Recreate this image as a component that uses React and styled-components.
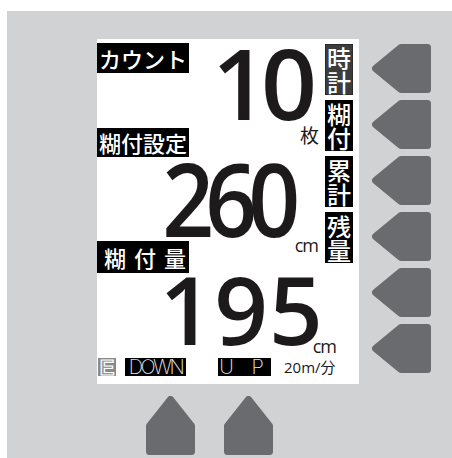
import React from "react";
import styled, { createGlobalStyle } from "styled-components";

const Global = createGlobalStyle`
  html, body { margin: 0; padding: 0; background: #fff; overflow: hidden; }
  #root { width: 452px; height: 458px; }
`;

const Panel = styled.div`
  box-sizing: border-box;
  margin: 11px 0 0 7px;
  width: 445px;
  height: 447px;
  background: #d1d2d4;
  padding: 28px 0 0 90px;
  display: grid;
  grid-template-columns: 262px 59px;
  grid-template-rows: 345px auto;
  column-gap: 13px;
`;

const Screen = styled.div`
  box-sizing: border-box;
  background: #fff;
  display: flex;
  flex-direction: column;
  padding-right: 6px;
  color: #1c1a1b;
`;

const TopPart = styled.div`
  display: flex;
`;

const LeftArea = styled.div`
  flex: 1;
  display: flex;
  flex-direction: column;
  align-items: flex-start;
`;

const Label = styled.div`
  box-sizing: border-box;
  width: 92px;
  height: ${(p) => p.$h}px;
  margin-top: ${(p) => p.$mt}px;
  background: #000;
  color: #fff;
  font-family: "Noto Sans CJK JP", sans-serif;
  font-weight: 500;
  font-size: 22px;
  line-height: ${(p) => p.$h}px;
  letter-spacing: ${(p) => p.$ls || 0}px;
  padding-left: ${(p) => p.$pl || 2}px;
  white-space: nowrap;
`;

const NumberRow = styled.div`
  align-self: stretch;
  display: flex;
  justify-content: flex-end;
  align-items: flex-end;
  margin-top: ${(p) => p.$mt}px;
  padding-right: ${(p) => p.$pr}px;
`;

const BigNum = styled.span`
  display: inline-block;
  font-family: "Open Sans", sans-serif;
  font-weight: 600;
  font-size: ${(p) => p.$size}px;
  line-height: ${(p) => p.$lh}px;
  letter-spacing: ${(p) => p.$ls}px;
  transform: scaleX(${(p) => p.$sx || 1});
  transform-origin: right bottom;
`;

const Unit = styled.span`
  font-family: "Open Sans", "Noto Sans CJK JP", sans-serif;
  font-size: ${(p) => p.$size}px;
  line-height: 14px;
  margin-bottom: ${(p) => p.$mb}px;
  margin-left: ${(p) => p.$ml}px;
  letter-spacing: -1px;
`;

const TagColumn = styled.div`
  width: 28px;
  display: flex;
  flex-direction: column;
  gap: 5px;
  padding-top: 5px;
`;

const Tag = styled.div`
  box-sizing: border-box;
  width: 28px;
  height: 51px;
  background: ${(p) => (p.$dim ? "#3c3c3c" : "#000")};
  border: 1px solid ${(p) => (p.$dim ? "#2a2a2a" : "#000")};
  color: #fff;
  font-family: "Noto Sans CJK JP", sans-serif;
  font-weight: 500;
  font-size: 24px;
  line-height: 24px;
  text-align: center;
  display: flex;
  flex-direction: column;
  justify-content: center;
`;

const BottomBar = styled.div`
  display: flex;
  align-items: center;
  height: 18px;
  margin-top: 15px;
  padding-left: 1px;
`;

const EBox = styled.div`
  width: 18px;
  height: 18px;
  background: #8a8a8a;
  color: #9a9a9a;
  -webkit-text-stroke: 1.2px #fff;
  font-family: "Liberation Sans", sans-serif;
  font-weight: 700;
  font-size: 22px;
  line-height: 20px;
  text-align: center;
`;

const ModeBox = styled.div`
  box-sizing: border-box;
  width: ${(p) => p.$w}px;
  height: 18px;
  margin-left: ${(p) => p.$ml}px;
  background: #000;
  color: #e6e6e6;
  font-family: "Inter", "Liberation Sans", sans-serif;
  font-weight: 200;
  font-size: 20px;
  line-height: 18px;
  letter-spacing: ${(p) => p.$ls}px;
  text-align: center;
  white-space: pre;
`;

const Speed = styled.div`
  margin-left: 13px;
  font-family: "Open Sans", "Noto Sans CJK JP", sans-serif;
  font-size: 15px;
  line-height: 18px;
  color: #1c1a1b;
`;

const RightButtons = styled.div`
  display: flex;
  flex-direction: column;
  gap: 7px;
  padding-top: 5px;
`;

const BottomButtons = styled.div`
  display: flex;
  gap: 29px;
  padding: 12px 0 0 49px;
`;

const BTN = "#6a6b6f";

const LeftArrow = () => (
  <svg width="59" height="49" viewBox="0 0 59 49">
    <path
      d="M3.5 24.5 L29 3.5 L55.5 3.5 L55.5 45.5 L29 45.5 Z"
      fill={BTN}
      stroke={BTN}
      strokeWidth="7"
      strokeLinejoin="round"
    />
  </svg>
);

const UpArrow = () => (
  <svg width="49" height="59" viewBox="0 0 49 59">
    <path
      d="M24.5 3.5 L45.5 30 L45.5 55.5 L3.5 55.5 L3.5 30 Z"
      fill={BTN}
      stroke={BTN}
      strokeWidth="7"
      strokeLinejoin="round"
    />
  </svg>
);

export default function App() {
  return (
    <>
      <Global />
      <Panel>
        <Screen>
          <TopPart>
            <LeftArea>
              <Label $h={30} $mt={4}>カウント</Label>
              <NumberRow $mt={-26} $pr={7}>
                <BigNum $size={98} $lh={70} $ls={-7}>10</BigNum>
                <Unit $size={19} $mb={-26} $ml={-10}>枚</Unit>
              </NumberRow>
              <Label $h={29} $mt={11}>糊付設定</Label>
              <NumberRow $mt={5} $pr={7}>
                <BigNum $size={101} $lh={72} $ls={-10} $sx={0.9}>260</BigNum>
                <Unit $size={18} $mb={-18} $ml={3}>cm</Unit>
              </NumberRow>
              <Label $h={32} $mt={7} $ls={8} $pl={7}>糊付量</Label>
            </LeftArea>
            <TagColumn>
              <Tag $dim>時<br />計</Tag>
              <Tag>糊<br />付</Tag>
              <Tag>累<br />計</Tag>
              <Tag>残<br />量</Tag>
            </TagColumn>
          </TopPart>
          <NumberRow $mt={3} $pr={17}>
            <BigNum $size={94} $lh={67} $ls={1}>195</BigNum>
            <Unit $size={18} $mb={-10} $ml={-11}>cm</Unit>
          </NumberRow>
          <BottomBar>
            <EBox>E</EBox>
            <ModeBox $w={61} $ml={9} $ls={-2.5}>DOWN</ModeBox>
            <ModeBox $w={53} $ml={32} $ls={6}>U P</ModeBox>
            <Speed>20m/分</Speed>
          </BottomBar>
        </Screen>
        <RightButtons>
          {[0, 1, 2, 3, 4, 5].map((i) => (
            <LeftArrow key={i} />
          ))}
        </RightButtons>
        <BottomButtons>
          <UpArrow />
          <UpArrow />
        </BottomButtons>
      </Panel>
    </>
  );
}
